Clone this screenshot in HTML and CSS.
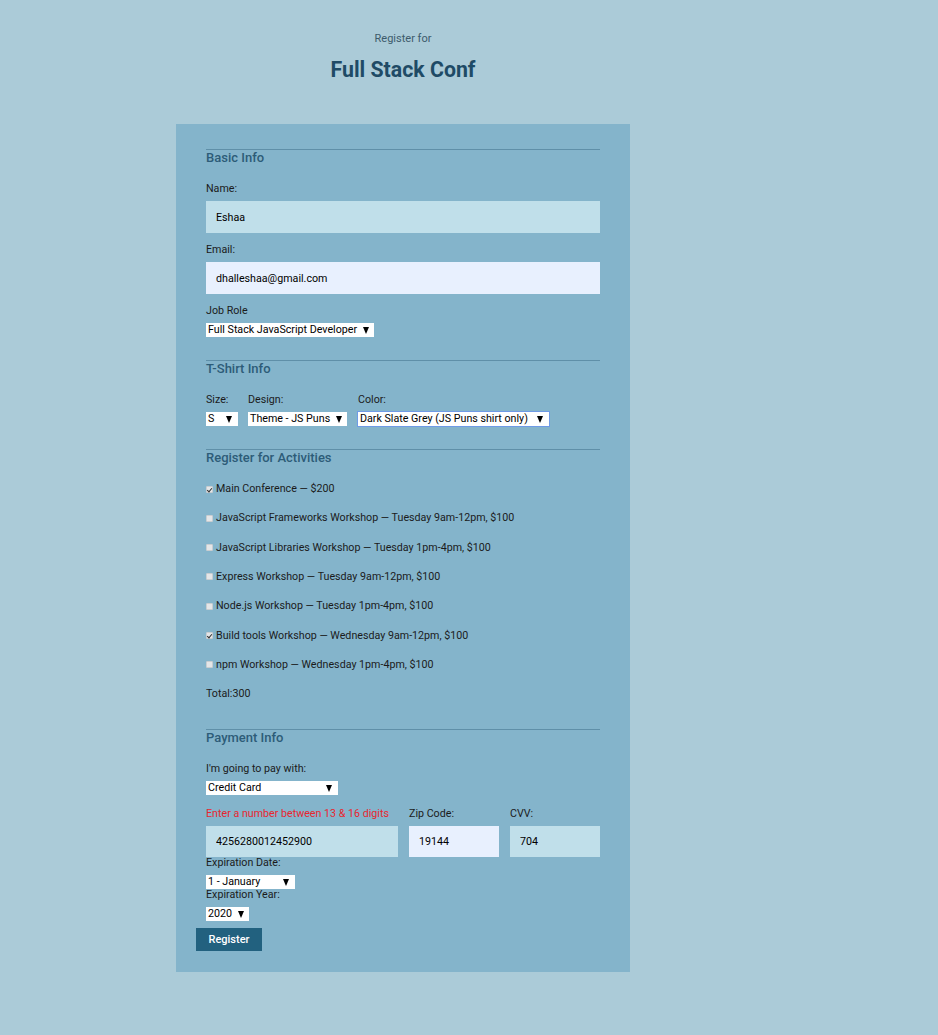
FILE: index.html
```html
<!DOCTYPE html>
<html lang="en">
<head>
<meta charset="utf-8">
<title>Full Stack Conf</title>
<link rel="stylesheet" href="styles.css">
</head>
<body>
<div class="page">
  <header class="header">
    <p class="pre">Register for</p>
    <h1 class="title">Full Stack Conf</h1>
  </header>
  <form class="form">
    <section class="section">
      <h2 class="sec-title">Basic Info</h2>
      <label class="lbl first">Name:</label>
      <input class="field" type="text" value="Eshaa">
      <label class="lbl">Email:</label>
      <input class="field autofill" type="email" value="dhalleshaa@gmail.com">
      <label class="lbl">Job Role</label>
      <span class="sel w-job">Full Stack JavaScript Developer</span>
    </section>

    <section class="section">
      <h2 class="sec-title">T-Shirt Info</h2>
      <div class="shirt-row">
        <div class="col">
          <label class="lbl first">Size:</label>
          <span class="sel w-size">S</span>
        </div>
        <div class="col">
          <label class="lbl first">Design:</label>
          <span class="sel w-design">Theme - JS Puns</span>
        </div>
        <div class="col">
          <label class="lbl first">Color:</label>
          <span class="sel w-color focus">Dark Slate Grey (JS Puns shirt only)</span>
        </div>
      </div>
    </section>

    <section class="section">
      <h2 class="sec-title">Register for Activities</h2>
      <ul class="acts">
        <li><span class="cb checked"></span>Main Conference — $200</li>
        <li><span class="cb"></span>JavaScript Frameworks Workshop — Tuesday 9am-12pm, $100</li>
        <li><span class="cb"></span>JavaScript Libraries Workshop — Tuesday 1pm-4pm, $100</li>
        <li><span class="cb"></span>Express Workshop — Tuesday 9am-12pm, $100</li>
        <li><span class="cb"></span>Node.js Workshop — Tuesday 1pm-4pm, $100</li>
        <li><span class="cb checked"></span>Build tools Workshop — Wednesday 9am-12pm, $100</li>
        <li><span class="cb"></span>npm Workshop — Wednesday 1pm-4pm, $100</li>
      </ul>
      <p class="total">Total:300</p>
    </section>

    <section class="section last">
      <h2 class="sec-title">Payment Info</h2>
      <label class="lbl first">I'm going to pay with:</label>
      <span class="sel w-pay">Credit Card</span>
      <div class="card-grid">
        <label class="lbl error">Enter a number between 13 &amp; 16 digits</label>
        <label class="lbl">Zip Code:</label>
        <label class="lbl">CVV:</label>
        <input class="field small" type="text" value="4256280012452900">
        <input class="field small autofill" type="text" value="19144">
        <input class="field small" type="text" value="704">
      </div>
      <label class="lbl tight">Expiration Date:</label>
      <span class="sel w-month">1 - January</span>
      <label class="lbl tight">Expiration Year:</label>
      <span class="sel w-year">2020</span>
      <button class="btn" type="button">Register</button>
    </section>
  </form>
</div>
</body>
</html>
```

FILE: styles.css
```css
* { box-sizing: border-box; }

html, body {
  margin: 0;
  padding: 0;
}

body {
  background: #abcbd8;
  font-family: Roboto, "Liberation Sans", Arial, sans-serif;
  color: #1b1b1b;
  min-height: 1035px;
}

.page {
  width: 454px;
  margin-left: 176px;
}

.header {
  padding-top: 31px;
  text-align: center;
}

.pre {
  margin: 0;
  font-size: 11px;
  line-height: 15px;
  color: #3d5b6c;
}

.title {
  margin: 12px 0 0;
  font-size: 21.3px;
  line-height: 24px;
  font-weight: 700;
  color: #1f4b66;
}

.form {
  margin-top: 42px;
  background: #84b4cb;
  padding: 25px 30px 21px;
}

.section {
  border-top: 1px solid #5f8fa8;
  padding-bottom: 23px;
}

.section.last { padding-bottom: 0; }

.sec-title {
  margin: 0;
  font-size: 13px;
  line-height: 16px;
  font-weight: 500;
  color: #2d5c78;
}

.lbl {
  display: block;
  font-size: 10.7px;
  line-height: 14px;
  margin-top: 10px;
  margin-bottom: 5px;
  color: #1b1b1b;
}

.lbl.first { margin-top: 16px; }

.lbl.tight {
  line-height: 12px;
  margin: 0 0 6px;
}

.field {
  display: block;
  width: 100%;
  height: 32px;
  border: none;
  outline: none;
  background: #c0dfea;
  padding: 0 10px;
  font-family: inherit;
  font-size: 10.7px;
  color: #000;
}

.field.autofill { background: #e8f0fe; }

.field.small { height: 31px; }

.sel {
  display: flex;
  align-items: center;
  justify-content: space-between;
  height: 14px;
  background: #fff;
  font-size: 10.7px;
  line-height: 14px;
  padding: 0 6px 0 2px;
  color: #000;
  white-space: nowrap;
}

.sel::after {
  content: "";
  width: 0;
  height: 0;
  border-left: 3.5px solid transparent;
  border-right: 3.5px solid transparent;
  border-top: 7px solid #000;
  margin-left: 6px;
}

.sel.focus {
  outline: 1px solid #6f9be6;
  outline-offset: 0;
}

.w-job { width: 168px; }
.w-size { width: 32px; }
.w-design { width: 99px; }
.w-color { width: 191px; }
.w-pay { width: 132px; }
.w-month { width: 89px; }
.w-year { width: 43px; }

.shirt-row {
  display: flex;
}

.shirt-row .col:nth-child(1) { width: 42px; }
.shirt-row .col:nth-child(2) { width: 110px; }

.acts {
  list-style: none;
  margin: 16px 0 0;
  padding: 0;
  display: flex;
  flex-direction: column;
  gap: 15.33px;
}

.acts li {
  display: flex;
  align-items: center;
  font-size: 10.7px;
  line-height: 14px;
  color: #1b1b1b;
}

.cb {
  width: 7px;
  height: 7px;
  background: #e4e6e8;
  border: 1px solid #c9cdd0;
  border-radius: 1px;
  margin-right: 3px;
  position: relative;
  flex: none;
}

.cb.checked::after {
  content: "";
  position: absolute;
  left: 1px;
  top: 0;
  width: 2px;
  height: 4px;
  border-right: 1.2px solid #333;
  border-bottom: 1.2px solid #333;
  transform: rotate(40deg);
}

.total {
  margin: 15.33px 0 5px;
  font-size: 10.7px;
  line-height: 14px;
}

.card-grid {
  display: grid;
  grid-template-columns: 192px 90px 90px;
  column-gap: 11px;
  margin-top: 12px;
}

.card-grid .lbl {
  margin: 0 0 5px;
  white-space: nowrap;
}

.lbl.error { color: #e8262f; }

.btn {
  display: block;
  margin: 7px 0 0 -10px;
  height: 23px;
  width: 66px;
  padding: 0;
  border: none;
  background: #22617f;
  color: #fff;
  font-family: inherit;
  font-size: 11px;
  font-weight: 500;
}
```
